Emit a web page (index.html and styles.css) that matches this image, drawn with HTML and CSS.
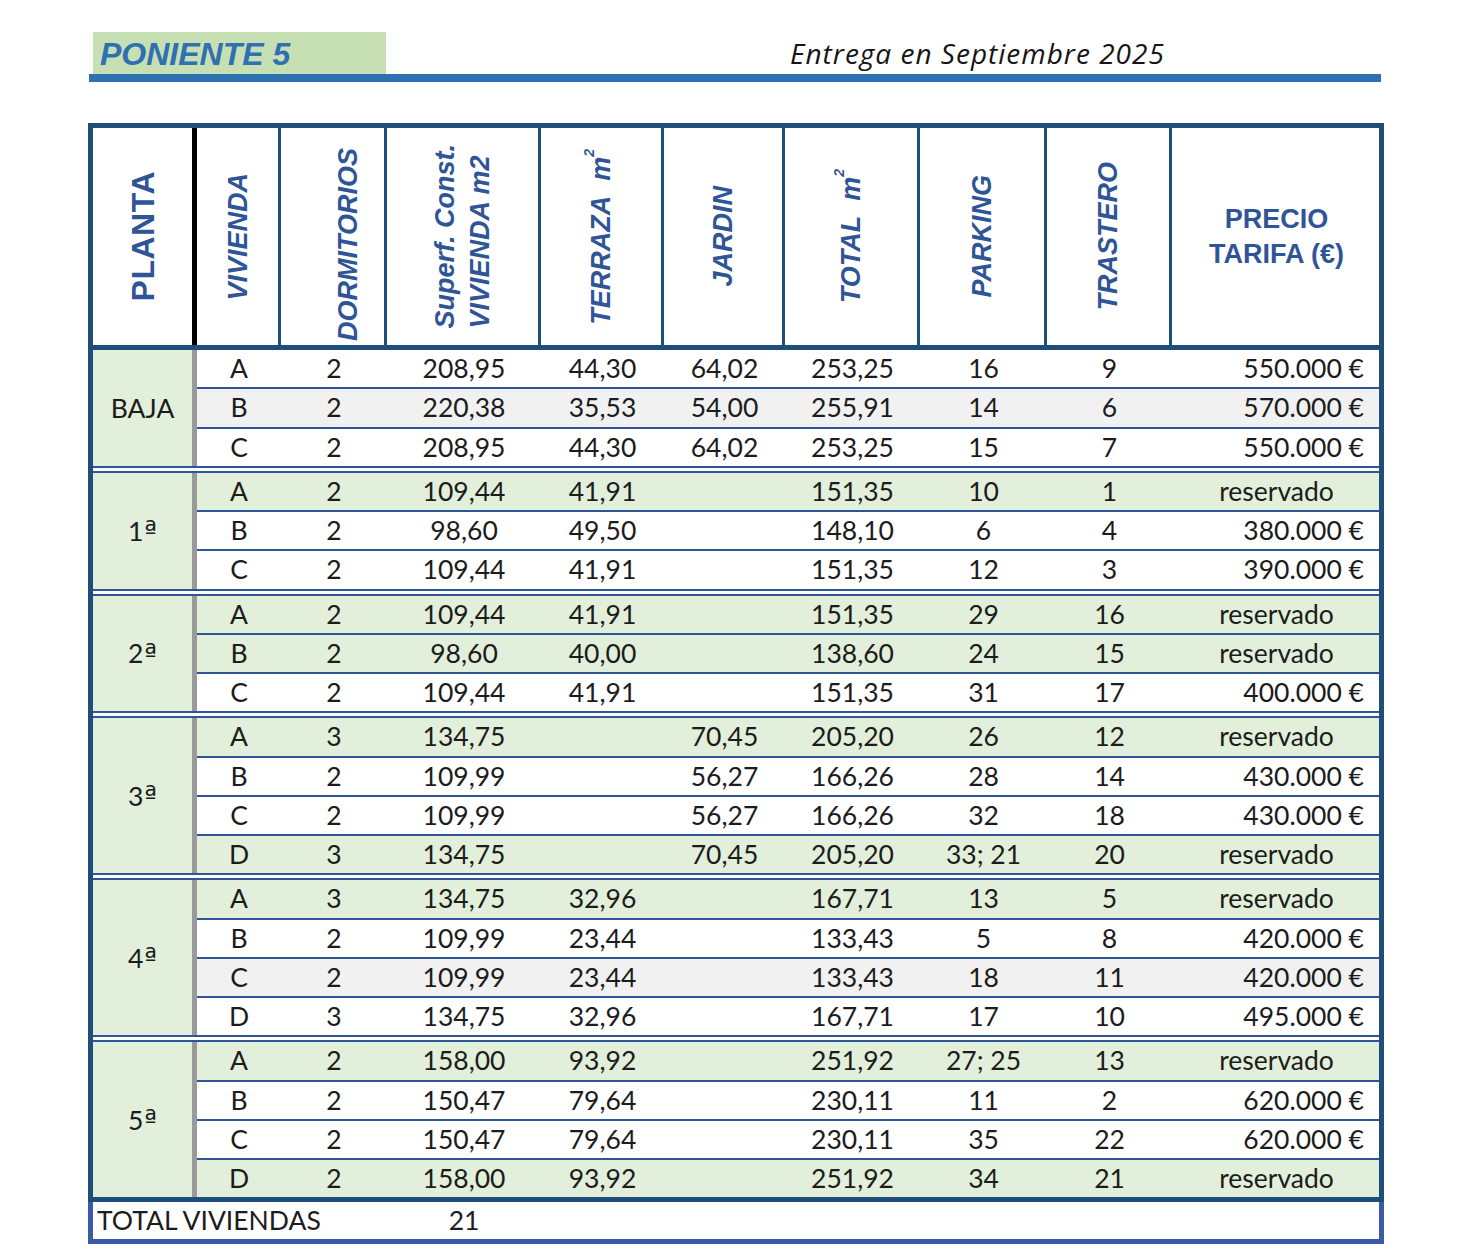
FILE: index.html
```html
<!DOCTYPE html>
<html lang="es">
<head>
<meta charset="utf-8">
<title>Poniente 5</title>
<link rel="stylesheet" href="styles.css">
</head>
<body>
<div class="page">
  <div class="title-row">
    <div class="title-box">PONIENTE 5</div>
    <div class="entrega">Entrega en Septiembre 2025</div>
  </div>
  <div class="rule"></div>

  <div class="sheet">
    <div class="thead">
      <div class="th th-planta"><span class="vl vl-planta">PLANTA</span></div>
      <div class="th"><span class="vl">VIVIENDA</span></div>
      <div class="th"><span class="vl vl-dorm">DORMITORIOS</span></div>
      <div class="th"><span class="vl vl-two">Superf. Const.<br>VIVIENDA m2</span></div>
      <div class="th"><span class="vl">TERRAZA&nbsp;&nbsp;<span class="m">m</span><sup>2</sup></span></div>
      <div class="th"><span class="vl">JARDIN</span></div>
      <div class="th"><span class="vl">TOTAL&nbsp;&nbsp;<span class="m">m</span><sup>2</sup></span></div>
      <div class="th"><span class="vl">PARKING</span></div>
      <div class="th"><span class="vl">TRASTERO</span></div>
      <div class="th th-last"><span class="hl">PRECIO<br>TARIFA (€)</span></div>
    </div>

    <div class="group">
      <div class="planta">BAJA</div>
      <div class="rows">
        <div class="row"><span>A</span><span>2</span><span>208,95</span><span>44,30</span><span>64,02</span><span>253,25</span><span>16</span><span>9</span><span class="price">550.000 €</span></div>
        <div class="row gray"><span>B</span><span>2</span><span>220,38</span><span>35,53</span><span>54,00</span><span>255,91</span><span>14</span><span>6</span><span class="price">570.000 €</span></div>
        <div class="row"><span>C</span><span>2</span><span>208,95</span><span>44,30</span><span>64,02</span><span>253,25</span><span>15</span><span>7</span><span class="price">550.000 €</span></div>
      </div>
    </div>

    <div class="group">
      <div class="planta">1<span class="ord">ª</span></div>
      <div class="rows">
        <div class="row green"><span>A</span><span>2</span><span>109,44</span><span>41,91</span><span></span><span>151,35</span><span>10</span><span>1</span><span class="res">reservado</span></div>
        <div class="row"><span>B</span><span>2</span><span>98,60</span><span>49,50</span><span></span><span>148,10</span><span>6</span><span>4</span><span class="price">380.000 €</span></div>
        <div class="row"><span>C</span><span>2</span><span>109,44</span><span>41,91</span><span></span><span>151,35</span><span>12</span><span>3</span><span class="price">390.000 €</span></div>
      </div>
    </div>

    <div class="group">
      <div class="planta">2<span class="ord">ª</span></div>
      <div class="rows">
        <div class="row green"><span>A</span><span>2</span><span>109,44</span><span>41,91</span><span></span><span>151,35</span><span>29</span><span>16</span><span class="res">reservado</span></div>
        <div class="row green"><span>B</span><span>2</span><span>98,60</span><span>40,00</span><span></span><span>138,60</span><span>24</span><span>15</span><span class="res">reservado</span></div>
        <div class="row"><span>C</span><span>2</span><span>109,44</span><span>41,91</span><span></span><span>151,35</span><span>31</span><span>17</span><span class="price">400.000 €</span></div>
      </div>
    </div>

    <div class="group">
      <div class="planta">3<span class="ord">ª</span></div>
      <div class="rows">
        <div class="row green"><span>A</span><span>3</span><span>134,75</span><span></span><span>70,45</span><span>205,20</span><span>26</span><span>12</span><span class="res">reservado</span></div>
        <div class="row"><span>B</span><span>2</span><span>109,99</span><span></span><span>56,27</span><span>166,26</span><span>28</span><span>14</span><span class="price">430.000 €</span></div>
        <div class="row"><span>C</span><span>2</span><span>109,99</span><span></span><span>56,27</span><span>166,26</span><span>32</span><span>18</span><span class="price">430.000 €</span></div>
        <div class="row green"><span>D</span><span>3</span><span>134,75</span><span></span><span>70,45</span><span>205,20</span><span>33; 21</span><span>20</span><span class="res">reservado</span></div>
      </div>
    </div>

    <div class="group">
      <div class="planta">4<span class="ord">ª</span></div>
      <div class="rows">
        <div class="row green"><span>A</span><span>3</span><span>134,75</span><span>32,96</span><span></span><span>167,71</span><span>13</span><span>5</span><span class="res">reservado</span></div>
        <div class="row"><span>B</span><span>2</span><span>109,99</span><span>23,44</span><span></span><span>133,43</span><span>5</span><span>8</span><span class="price">420.000 €</span></div>
        <div class="row gray"><span>C</span><span>2</span><span>109,99</span><span>23,44</span><span></span><span>133,43</span><span>18</span><span>11</span><span class="price">420.000 €</span></div>
        <div class="row"><span>D</span><span>3</span><span>134,75</span><span>32,96</span><span></span><span>167,71</span><span>17</span><span>10</span><span class="price">495.000 €</span></div>
      </div>
    </div>

    <div class="group">
      <div class="planta">5<span class="ord">ª</span></div>
      <div class="rows">
        <div class="row green"><span>A</span><span>2</span><span>158,00</span><span>93,92</span><span></span><span>251,92</span><span>27; 25</span><span>13</span><span class="res">reservado</span></div>
        <div class="row"><span>B</span><span>2</span><span>150,47</span><span>79,64</span><span></span><span>230,11</span><span>11</span><span>2</span><span class="price">620.000 €</span></div>
        <div class="row"><span>C</span><span>2</span><span>150,47</span><span>79,64</span><span></span><span>230,11</span><span>35</span><span>22</span><span class="price">620.000 €</span></div>
        <div class="row green"><span>D</span><span>2</span><span>158,00</span><span>93,92</span><span></span><span>251,92</span><span>34</span><span>21</span><span class="res">reservado</span></div>
      </div>
    </div>
  </div>

  <div class="total">
    <span class="total-label">TOTAL VIVIENDAS</span>
    <span class="total-num">21</span>
  </div>
</div>
</body>
</html>
```

FILE: styles.css
```css
html, body {
  margin: 0;
  padding: 0;
  background: #ffffff;
}

.page {
  padding: 32px 0 0 89px;
  width: 1296px;
  font-family: "Lato", "Liberation Sans", sans-serif;
  color: #1c1c1c;
}

/* ---------- title ---------- */
.title-row {
  display: flex;
  align-items: flex-end;
  height: 42px;
}

.title-box {
  margin-left: 4px;
  width: 293px;
  height: 42px;
  box-sizing: border-box;
  padding: 6px 0 0 7px;
  background: #c6e0b4;
  font-family: "Liberation Sans", Arial, sans-serif;
  font-weight: bold;
  font-style: italic;
  font-size: 32px;
  line-height: 32px;
  color: #2f6fb2;
}

.entrega {
  margin-left: 404px;
  font-family: "Open Sans", "Liberation Sans", sans-serif;
  font-style: italic;
  font-size: 28px;
  letter-spacing: 1px;
  line-height: 34px;
  margin-bottom: 4px;
  color: #151515;
}

.rule {
  width: 1292px;
  height: 8px;
  background: #2e72b4;
}

/* ---------- table ---------- */
.sheet {
  margin-top: 41px;
  margin-left: -1px;
  width: 1296px;
  box-sizing: border-box;
  border: 5px solid #1f4e7a;
  background: #ffffff;
}

.thead {
  display: grid;
  grid-template-columns: 104px 84px 106px 154px 123px 121px 135px 127px 125px 1fr;
  height: 222px;
  box-sizing: border-box;
  border-bottom: 5px solid #1f4e7a;
}

.th {
  box-sizing: border-box;
  border-right: 3px solid #1f4e7a;
  display: flex;
  align-items: center;
  justify-content: center;
  font-family: "Liberation Sans", Arial, sans-serif;
  font-weight: bold;
  font-style: italic;
  font-size: 27px;
  color: #2f5597;
}

.th-planta {
  border-right: 5px solid #000000;
}

.th-last {
  border-right: none;
}

.vl {
  writing-mode: vertical-rl;
  transform: rotate(180deg);
  white-space: nowrap;
  line-height: 30px;
}

.vl-planta {
  font-style: normal;
  font-size: 32px;
  letter-spacing: 0.5px;
}

.vl-dorm {
  margin-left: 30px;
  margin-top: 16px;
}

.vl-two {
  line-height: 35px;
}

.vl .m {
  font-weight: bold;
}

.vl sup {
  font-size: 14px;
  line-height: 0;
  vertical-align: 12px;
}

.hl {
  font-style: normal;
  text-align: center;
  line-height: 35px;
  margin-left: 2px;
}

/* ---------- body ---------- */
.group {
  display: grid;
  grid-template-columns: 104px 1fr;
  background: #ffffff;
}

.group + .group {
  border-top: 7px double #2f5597;
}

.planta {
  box-sizing: border-box;
  border-right: 5px solid #9a9a9a;
  background: #e2efda;
  display: flex;
  align-items: center;
  justify-content: center;
  font-size: 26.5px;
}

.ord {
  font-family: "DejaVu Sans", sans-serif;
  font-size: 27px;
  vertical-align: -6px;
  margin-left: 1px;
}

.rows {
  display: flex;
  flex-direction: column;
}

.row {
  display: grid;
  grid-template-columns: 84px 106px 154px 123px 121px 135px 127px 125px 1fr;
  height: 37.25px;
  align-items: center;
  font-size: 26.5px;
  line-height: 37px;
  text-align: center;
  background: #ffffff;
}

.row + .row {
  border-top: 2px solid #2f5597;
}

.row.green {
  background: #e2efda;
}

.row.gray {
  background: #f0f1f0;
}

.row .price {
  text-align: right;
  padding-right: 15px;
}

.row .res {
  text-align: center;
  padding-left: 2px;
}

/* ---------- total ---------- */
.total {
  margin-left: -1px;
  width: 1296px;
  height: 42px;
  box-sizing: border-box;
  border: 5px solid #3a5ca6;
  border-top: none;
  display: grid;
  grid-template-columns: 294px 154px 1fr;
  align-items: center;
  font-size: 26.5px;
  line-height: 37px;
}

.total-label {
  padding-left: 4px;
}

.total-num {
  text-align: center;
}
```
